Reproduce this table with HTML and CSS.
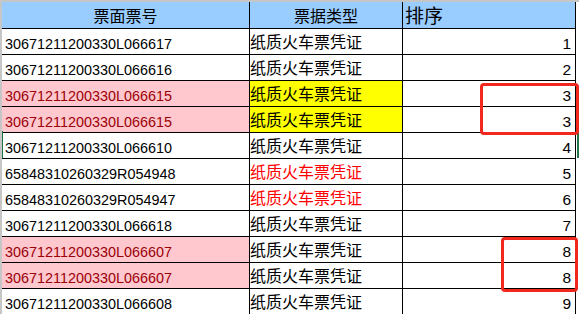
FILE: index.html
```html
<!DOCTYPE html>
<html lang="zh">
<head>
<meta charset="utf-8">
<title>票据排序</title>
<link rel="stylesheet" href="styles.css">
</head>
<body>
<div class="sheet">
  <div class="grid">
    <div class="cell head c1">票面票号</div>
    <div class="cell head c2">票据类型</div>
    <div class="cell head c3">排序</div>

    <div class="cell num">30671211200330L066617</div>
    <div class="cell cjk">纸质火车票凭证</div>
    <div class="cell ord">1</div>

    <div class="cell num">30671211200330L066616</div>
    <div class="cell cjk">纸质火车票凭证</div>
    <div class="cell ord">2</div>

    <div class="cell num dup">30671211200330L066615</div>
    <div class="cell cjk hl">纸质火车票凭证</div>
    <div class="cell ord">3</div>

    <div class="cell num dup">30671211200330L066615</div>
    <div class="cell cjk hl">纸质火车票凭证</div>
    <div class="cell ord">3</div>

    <div class="cell num">30671211200330L066610</div>
    <div class="cell cjk">纸质火车票凭证</div>
    <div class="cell ord">4</div>

    <div class="cell num">65848310260329R054948</div>
    <div class="cell cjk red">纸质火车票凭证</div>
    <div class="cell ord">5</div>

    <div class="cell num">65848310260329R054947</div>
    <div class="cell cjk red">纸质火车票凭证</div>
    <div class="cell ord">6</div>

    <div class="cell num">30671211200330L066618</div>
    <div class="cell cjk">纸质火车票凭证</div>
    <div class="cell ord">7</div>

    <div class="cell num dup">30671211200330L066607</div>
    <div class="cell cjk">纸质火车票凭证</div>
    <div class="cell ord">8</div>

    <div class="cell num dup">30671211200330L066607</div>
    <div class="cell cjk">纸质火车票凭证</div>
    <div class="cell ord">8</div>

    <div class="cell num">30671211200330L066608</div>
    <div class="cell cjk">纸质火车票凭证</div>
    <div class="cell ord">9</div>
  </div>
  <div class="selection"></div>
  <div class="mark mark-a"></div>
  <div class="mark mark-b"></div>
  <div class="corner"></div>
</div>
</body>
</html>
```

FILE: styles.css
```css
html, body {
  margin: 0;
  padding: 0;
  background: #ffffff;
}

.sheet {
  position: relative;
  width: 579px;
  height: 314px;
  overflow: hidden;
  border-top: 2px solid #c6c6c6;
  border-left: 2px solid #c6c6c6;
  box-sizing: border-box;
}

.grid {
  display: grid;
  grid-template-columns: 248px 153px 173px;
  grid-auto-rows: 26px;
  grid-template-rows: 27px;
}

.cell {
  box-sizing: border-box;
  border-right: 1px solid #000;
  border-bottom: 1px solid #000;
  white-space: nowrap;
  overflow: hidden;
  color: #000;
}

.head {
  background: #99ccff;
  font-family: "Noto Sans CJK SC", sans-serif;
  font-size: 16px;
  line-height: 18px;
  padding-top: 4px;
  overflow: visible;
}

.head.c1, .head.c2 {
  text-align: center;
}

.head.c3 {
  font-size: 19px;
  line-height: 22px;
  padding-top: 2px;
  padding-left: 2px;
}

.num {
  font-family: "Liberation Sans", sans-serif;
  font-size: 14.4px;
  line-height: 16px;
  padding-top: 7px;
  padding-left: 3px;
}

.cjk {
  font-family: "Noto Sans CJK SC", sans-serif;
  font-size: 16px;
  line-height: 18px;
  padding-top: 3px;
  padding-left: 0;
}

.ord {
  font-family: "Liberation Sans", sans-serif;
  font-size: 15.5px;
  line-height: 16px;
  padding-top: 7px;
  padding-right: 4px;
  text-align: right;
}

.dup {
  background: #ffc7ce;
  color: #9c0006;
}

.hl {
  background: #ffff00;
}

.red {
  color: #ff0000;
}

.selection {
  position: absolute;
  left: -1px;
  top: 129px;
  width: 574px;
  height: 27px;
  border-left: 2px solid #217346;
  border-right: 2px solid #217346;
}

.mark {
  position: absolute;
  border: 3px solid #f0281e;
  border-radius: 4px;
  box-sizing: border-box;
}

.mark-a {
  left: 478px;
  top: 81px;
  width: 99px;
  height: 52px;
}

.mark-b {
  left: 499px;
  top: 235px;
  width: 77px;
  height: 55px;
}

.corner {
  position: absolute;
  right: 0;
  top: -2px;
  width: 3px;
  height: 2px;
  background: #217346;
}
```
